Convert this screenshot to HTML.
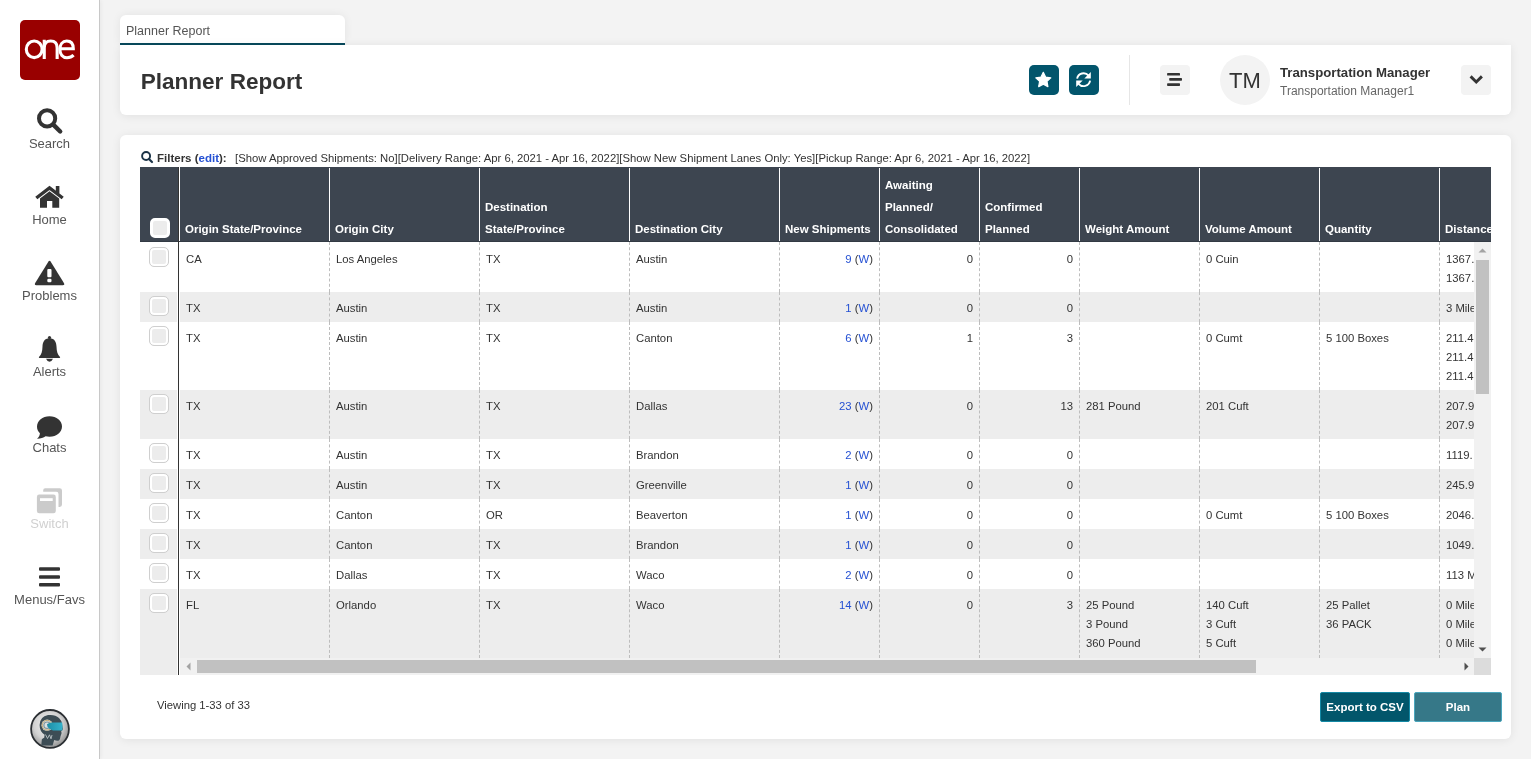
<!DOCTYPE html><html><head><meta charset="utf-8"><style>
*{box-sizing:border-box;margin:0;padding:0}
html,body{width:1531px;height:759px;overflow:hidden;background:#f3f3f3;font-family:"Liberation Sans",sans-serif;color:#333}
.a{position:absolute}
#side{position:absolute;left:0;top:0;width:100px;height:759px;background:#fff;border-right:1px solid #c8c8c8;box-shadow:1px 0 4px rgba(0,0,0,.05);z-index:2}
.logo{position:absolute;left:20px;top:20px;width:60px;height:60px;background:#990000;border-radius:5px}
.navt{position:absolute;left:0;width:99px;text-align:center;font-size:13px;line-height:16px;color:#555;white-space:nowrap}
#tab{position:absolute;left:120px;top:15px;width:225px;height:30px;background:#fff;border-radius:6px 6px 0 0;box-shadow:0 0 10px rgba(0,0,0,.07)}
#tab span{position:absolute;left:6px;top:8px;font-size:12.5px;color:#555;line-height:16px;white-space:nowrap}
#tab i{position:absolute;left:0;top:28px;width:225px;height:2px;background:#08495c}
#hdr{position:absolute;left:120px;top:45px;width:1391px;height:70px;background:#fff;border-radius:0 0 6px 6px;box-shadow:0 1px 10px rgba(0,0,0,.08)}
#card{position:absolute;left:120px;top:135px;width:1391px;height:604px;background:#fff;border-radius:6px;box-shadow:0 1px 10px rgba(0,0,0,.08)}
.title{position:absolute;left:140.7px;top:68.5px;font-size:22.55px;font-weight:bold;color:#333;line-height:26px;white-space:nowrap}
.b30{position:absolute;width:30px;height:30px;border-radius:4px}
.teal{background:#02556c;border-radius:5px}
.lg{background:#f3f3f3}
.nm{position:absolute;left:1280px;white-space:nowrap}
.filt{position:absolute;top:151px;left:157px;font-size:11.3px;line-height:14px;white-space:nowrap;color:#333}
#grid{position:absolute;left:140px;top:167px;width:1351px;height:508px;overflow:hidden;background:#fff}
.hb{position:absolute;left:0;top:0;width:1351px;height:75px;background:#3d4550;border-bottom:1px solid #323a44}
.hc{position:absolute;top:0;height:74px;color:#fff;font-weight:bold;font-size:11.5px;line-height:22px;padding:0 0 0 5px;white-space:nowrap}
.hc div{position:absolute;left:5px;bottom:1px}
.hsep{position:absolute;top:1px;width:1px;height:73px;background:#fff}
#body{position:absolute;left:40px;top:75px;width:1294px;height:416px;overflow:hidden}
.r{position:absolute;left:0;width:1400px}
.r.g{background:#ededed}
.c{position:absolute;top:0;bottom:0;border-right:1px dashed #bdbdbd;font-size:11.3px;line-height:19px;padding:7px 6px 0 6px;white-space:nowrap;overflow:hidden;color:#333}
.c.rt{text-align:right;padding-right:6px}
.lk{color:#2450d3}
.r0 .c{padding-top:8px}
.fz{position:absolute;left:0;width:37px}
.fz.g{background:#ededed}
.cb{position:absolute;left:9px;top:4px;width:20px;height:20px;border:1px solid #cfcfcf;border-radius:5px;background:#ececec;box-shadow:inset 0 0 0 2px #fff}
.sb{position:absolute;background:#f1f1f1}
.foot{position:absolute;left:157px;top:698px;font-size:11.25px;line-height:14px;color:#333;white-space:nowrap}
.fbtn{position:absolute;top:692px;height:30px;border-radius:2px;color:#fff;font-weight:bold;font-size:11.5px;line-height:28px;text-align:center;white-space:nowrap}
</style></head><body><div id="root" style="position:absolute;left:0;top:0;width:1531px;height:759px;overflow:hidden;will-change:transform"><div id="side"><div class="logo"><svg class="a" style="left:0px;top:0px" width="60" height="60" viewBox="0 0 60 60"><g fill="none" stroke="#fff" stroke-width="3.1"><ellipse cx="14.2" cy="29.3" rx="7.9" ry="8.3"/><path d="M24.25 38.9V19.8M24.25 28C24.25 23.2 27 21 30.7 21C34.4 21 37.15 23.2 37.15 28V38.9"/><path d="M40 28.8H53.3C53.3 23.5 50.5 21 46.7 21C42.5 21 39.9 24.5 39.9 29.3C39.9 34.5 42.8 37.7 47 37.7C49.8 37.7 52 36.8 53.6 35.2"/></g></svg></div><svg class="a" style="left:30px;top:100px" width="40" height="40" viewBox="0 0 40 40"><g fill="none" stroke="#333" stroke-width="4"><circle cx="17.1" cy="18.4" r="8.1"/><path d="M23.3 24.6L30.2 31.5" stroke-width="4.4" stroke-linecap="round"/></g></svg><svg class="a" style="left:30px;top:180px" width="40" height="32" viewBox="0 0 40 32"><g fill="#333"><path d="M6.3 18L19.5 8L32.7 18" fill="none" stroke="#333" stroke-width="3.4" stroke-linecap="butt" stroke-linejoin="miter"/><rect x="25.8" y="6" width="3.6" height="7.5"/><path d="M10 18.6L19.5 11.2L29.2 18.6V27.8H22.3V21H17V27.8H10Z"/></g></svg><svg class="a" style="left:30px;top:256px" width="40" height="32" viewBox="0 0 40 32"><path d="M18.5 5.5Q19.55 3.9 20.6 5.5L33.9 27Q35 29.2 32.8 29.2H6.3Q4.1 29.2 5.2 27Z" fill="#333"/><rect x="17.3" y="13" width="4.2" height="8.3" rx="1" fill="#fff"/><rect x="17.3" y="22.8" width="4.2" height="3.5" rx="1.2" fill="#fff"/></svg><svg class="a" style="left:30px;top:332px" width="40" height="32" viewBox="0 0 40 32"><g fill="#333"><circle cx="19.5" cy="5.6" r="1.6"/><path d="M19.5 6.2C14 6.2 12.7 10.5 12.5 14.5C12.3 19.5 11.5 22.5 9 25Q8.4 25.9 9.6 25.9H29.4Q30.6 25.9 30 25C27.5 22.5 26.7 19.5 26.5 14.5C26.3 10.5 25 6.2 19.5 6.2Z"/><path d="M16 26.7H23Q21.5 29.8 19.5 29.8Q17.5 29.8 16 26.7Z"/></g></svg><svg class="a" style="left:30px;top:410px" width="40" height="32" viewBox="0 0 40 32"><path d="M19.5 6.2C26.5 6.2 32 10.8 32 16.5C32 22.2 26.5 26.8 19.5 26.8C18 26.8 16.9 26.6 15.6 26.3C13.5 27.6 10.8 28.6 7 28.7C9 27 9.8 25.6 9.9 23.3C8 21.5 7 19.2 7 16.5C7 10.8 12.5 6.2 19.5 6.2Z" fill="#333"/></svg><svg class="a" style="left:30px;top:484px" width="40" height="32" viewBox="0 0 40 32"><g fill="#cbcbcb"><path d="M15.2 4.3H29.7Q32 4.3 32 6.6V20.6Q32 22.9 29.7 22.9H28.5V10Q28.5 7.8 26.3 7.8H13.2V6.3Q13.2 4.3 15.2 4.3Z"/><rect x="6.9" y="10.6" width="18.9" height="18.6" rx="2.3"/></g><rect x="10" y="14.2" width="12.7" height="2.8" fill="#fff"/></svg><svg class="a" style="left:30px;top:560px" width="40" height="32" viewBox="0 0 40 32"><g fill="#333"><rect x="9" y="7.3" width="21" height="3.5" rx="1"/><rect x="9" y="15.2" width="21" height="3.5" rx="1"/><rect x="9" y="23" width="21" height="3.6" rx="1"/></g></svg><div class="navt" style="top:136px;color:#555">Search</div><div class="navt" style="top:212px;color:#555">Home</div><div class="navt" style="top:288px;color:#555">Problems</div><div class="navt" style="top:364px;color:#555">Alerts</div><div class="navt" style="top:440px;color:#555">Chats</div><div class="navt" style="top:516px;color:#d0d0d0">Switch</div><div class="navt" style="top:592px;color:#555">Menus/Favs</div><svg class="a" style="left:28px;top:707px" width="44" height="44" viewBox="0 0 44 44"><defs><radialGradient id="ag" cx="45%" cy="40%" r="62%"><stop offset="0" stop-color="#f6f6f6"/><stop offset=".6" stop-color="#d2d2d2"/><stop offset="1" stop-color="#8f8f8f"/></radialGradient><linearGradient id="vg" x1="0" y1="0" x2="1" y2="0"><stop offset="0" stop-color="#1d8ea6"/><stop offset="1" stop-color="#35b3cc"/></linearGradient></defs><circle cx="22" cy="21.9" r="18.9" fill="url(#ag)" stroke="#2b2f33" stroke-width="1.8"/><path d="M13.3 38.5L13.8 32.5Q14.5 31.3 16.2 30.8L16.6 27.8Q11.6 24.6 11.6 18Q11.9 9.6 20 8.1Q27 7.2 31 11Q33.6 13.6 34 16.5L34.8 22Q34.8 23.6 33.2 24.3L33.6 26Q33.1 27.8 32.6 29Q32.2 32.3 31 33.6Q28.2 34.2 26.2 33L24.6 38.5Z" fill="#3d4d55"/><path d="M17.5 27.5L19.5 31.5L21.5 27.8L23 31.8L24 28" fill="none" stroke="#c9d0d3" stroke-width=".8"/><circle cx="19.1" cy="18.2" r="5.6" fill="#d9e0e3"/><circle cx="19.1" cy="18.2" r="4.9" fill="none" stroke="#c3a465" stroke-width=".9"/><circle cx="19.1" cy="18.2" r="3.2" fill="none" stroke="#7d959d" stroke-width="1.2"/><path d="M19 17.2Q21 15.6 24 15.6H34.2Q34.8 19.6 34.2 23.6H25Q21.5 23 19.5 19.8Z" fill="url(#vg)"/></svg></div><div id="tab"><span>Planner Report</span><i></i></div><div id="hdr"></div><div class="title">Planner Report</div><div class="b30 teal" style="left:1029px;top:65px"></div><svg class="a" style="left:1029px;top:65px" width="30" height="30" viewBox="0 0 30 30"><path d="M14.3 7.3L16.6 12.1L21.8 12.8L18 16.4L18.9 21.6L14.3 19.1L9.7 21.6L10.6 16.4L6.8 12.8L12 12.1Z" fill="#fff" stroke="#fff" stroke-width="1.2" stroke-linejoin="round"/></svg><div class="b30 teal" style="left:1069px;top:65px"></div><svg class="a" style="left:1069px;top:65px" width="30" height="30" viewBox="0 0 30 30"><g fill="none" stroke="#fff" stroke-width="1.9"><path d="M8.1 13.6A6.6 6.6 0 0 1 19.6 10.6"/><path d="M21.1 15.6A6.6 6.6 0 0 1 9.6 18.8"/></g><g fill="#fff"><path d="M21.8 7V13.5H15.3Z"/><path d="M7.2 22V15.6H13.7Z"/></g></svg><div class="a" style="left:1129px;top:55px;width:1px;height:50px;background:#e6e6e6"></div><div class="b30 lg" style="left:1160px;top:65px"></div><svg class="a" style="left:1160px;top:65px" width="30" height="30" viewBox="0 0 30 30"><g fill="#333"><rect x="7.1" y="8" width="12.9" height="2.6" rx=".7"/><rect x="9.2" y="13.1" width="12.8" height="2.6" rx=".7"/><rect x="7.1" y="18.3" width="12.9" height="2.6" rx=".7"/></g></svg><div class="a" style="left:1220px;top:55px;width:50px;height:50px;border-radius:50%;background:#f3f3f3;font-size:22px;line-height:52px;text-align:center;color:#333">TM</div><div class="nm" style="top:65px;font-size:13.2px;font-weight:bold;line-height:16px;color:#333">Transportation Manager</div><div class="nm" style="top:83px;font-size:12px;line-height:16px;color:#666">Transportation Manager1</div><div class="b30 lg" style="left:1461px;top:65px"></div><svg class="a" style="left:1461px;top:65px" width="30" height="30" viewBox="0 0 30 30"><path d="M9.6 11.4L15.25 17L20.9 11.4" fill="none" stroke="#333" stroke-width="2.9"/></svg><div id="card"></div><svg class="a" style="left:138px;top:148px" width="20" height="20" viewBox="0 0 20 20"><g fill="none" stroke="#1b3347" stroke-width="1.9"><circle cx="8.1" cy="8" r="4"/><path d="M11 11L14 14" stroke-width="2.2" stroke-linecap="round"/></g></svg><div class="filt" style="font-size:11.5px"><b>Filters (<span style="color:#2450d3">edit</span>):</b></div><div class="filt" style="left:235px">[Show Approved Shipments: No][Delivery Range: Apr 6, 2021 - Apr 16, 2022][Show New Shipment Lanes Only: Yes][Pickup Range: Apr 6, 2021 - Apr 16, 2022]</div><div id="grid"><div class="hb"></div><div class="a" style="left:10px;top:51px;width:20px;height:20px;border-radius:5px;background:#ececec;border:3px solid #fff"></div><div class="a" style="left:38px;top:0;width:1px;height:508px;background:#333"></div><div class="a" style="left:39px;top:0;width:1px;height:74px;background:#fff"></div><div class="hc" style="left:40px;width:150px"><div>Origin State/Province</div></div><div class="hsep" style="left:189px"></div><div class="hc" style="left:190px;width:150px"><div>Origin City</div></div><div class="hsep" style="left:339px"></div><div class="hc" style="left:340px;width:150px"><div>Destination<br>State/Province</div></div><div class="hsep" style="left:489px"></div><div class="hc" style="left:490px;width:150px"><div>Destination City</div></div><div class="hsep" style="left:639px"></div><div class="hc" style="left:640px;width:100px"><div>New Shipments</div></div><div class="hsep" style="left:739px"></div><div class="hc" style="left:740px;width:100px"><div>Awaiting<br>Planned/<br>Consolidated</div></div><div class="hsep" style="left:839px"></div><div class="hc" style="left:840px;width:100px"><div>Confirmed<br>Planned</div></div><div class="hsep" style="left:939px"></div><div class="hc" style="left:940px;width:120px"><div>Weight Amount</div></div><div class="hsep" style="left:1059px"></div><div class="hc" style="left:1060px;width:120px"><div>Volume Amount</div></div><div class="hsep" style="left:1179px"></div><div class="hc" style="left:1180px;width:120px"><div>Quantity</div></div><div class="hsep" style="left:1299px"></div><div class="hc" style="left:1300px;width:200px"><div>Distance</div></div><div id="body"><div class="r r0" style="top:0px;height:50px"><div class="c" style="left:0px;width:150px">CA</div><div class="c" style="left:150px;width:150px">Los Angeles</div><div class="c" style="left:300px;width:150px">TX</div><div class="c" style="left:450px;width:150px">Austin</div><div class="c rt" style="left:600px;width:100px"><span class="lk">9</span> (<span class="lk">W</span>)</div><div class="c rt" style="left:700px;width:100px">0</div><div class="c rt" style="left:800px;width:100px">0</div><div class="c" style="left:900px;width:120px"></div><div class="c" style="left:1020px;width:120px">0 Cuin</div><div class="c" style="left:1140px;width:120px"></div><div class="c" style="left:1260px;width:200px">1367.<br>1367.</div></div><div class="r g" style="top:50px;height:30px"><div class="c" style="left:0px;width:150px">TX</div><div class="c" style="left:150px;width:150px">Austin</div><div class="c" style="left:300px;width:150px">TX</div><div class="c" style="left:450px;width:150px">Austin</div><div class="c rt" style="left:600px;width:100px"><span class="lk">1</span> (<span class="lk">W</span>)</div><div class="c rt" style="left:700px;width:100px">0</div><div class="c rt" style="left:800px;width:100px">0</div><div class="c" style="left:900px;width:120px"></div><div class="c" style="left:1020px;width:120px"></div><div class="c" style="left:1140px;width:120px"></div><div class="c" style="left:1260px;width:200px">3 Miles</div></div><div class="r" style="top:80px;height:68px"><div class="c" style="left:0px;width:150px">TX</div><div class="c" style="left:150px;width:150px">Austin</div><div class="c" style="left:300px;width:150px">TX</div><div class="c" style="left:450px;width:150px">Canton</div><div class="c rt" style="left:600px;width:100px"><span class="lk">6</span> (<span class="lk">W</span>)</div><div class="c rt" style="left:700px;width:100px">1</div><div class="c rt" style="left:800px;width:100px">3</div><div class="c" style="left:900px;width:120px"></div><div class="c" style="left:1020px;width:120px">0 Cumt</div><div class="c" style="left:1140px;width:120px">5 100 Boxes</div><div class="c" style="left:1260px;width:200px">211.4<br>211.4<br>211.4</div></div><div class="r g" style="top:148px;height:49px"><div class="c" style="left:0px;width:150px">TX</div><div class="c" style="left:150px;width:150px">Austin</div><div class="c" style="left:300px;width:150px">TX</div><div class="c" style="left:450px;width:150px">Dallas</div><div class="c rt" style="left:600px;width:100px"><span class="lk">23</span> (<span class="lk">W</span>)</div><div class="c rt" style="left:700px;width:100px">0</div><div class="c rt" style="left:800px;width:100px">13</div><div class="c" style="left:900px;width:120px">281 Pound</div><div class="c" style="left:1020px;width:120px">201 Cuft</div><div class="c" style="left:1140px;width:120px"></div><div class="c" style="left:1260px;width:200px">207.9<br>207.9</div></div><div class="r" style="top:197px;height:30px"><div class="c" style="left:0px;width:150px">TX</div><div class="c" style="left:150px;width:150px">Austin</div><div class="c" style="left:300px;width:150px">TX</div><div class="c" style="left:450px;width:150px">Brandon</div><div class="c rt" style="left:600px;width:100px"><span class="lk">2</span> (<span class="lk">W</span>)</div><div class="c rt" style="left:700px;width:100px">0</div><div class="c rt" style="left:800px;width:100px">0</div><div class="c" style="left:900px;width:120px"></div><div class="c" style="left:1020px;width:120px"></div><div class="c" style="left:1140px;width:120px"></div><div class="c" style="left:1260px;width:200px">1119.</div></div><div class="r g" style="top:227px;height:30px"><div class="c" style="left:0px;width:150px">TX</div><div class="c" style="left:150px;width:150px">Austin</div><div class="c" style="left:300px;width:150px">TX</div><div class="c" style="left:450px;width:150px">Greenville</div><div class="c rt" style="left:600px;width:100px"><span class="lk">1</span> (<span class="lk">W</span>)</div><div class="c rt" style="left:700px;width:100px">0</div><div class="c rt" style="left:800px;width:100px">0</div><div class="c" style="left:900px;width:120px"></div><div class="c" style="left:1020px;width:120px"></div><div class="c" style="left:1140px;width:120px"></div><div class="c" style="left:1260px;width:200px">245.9</div></div><div class="r" style="top:257px;height:30px"><div class="c" style="left:0px;width:150px">TX</div><div class="c" style="left:150px;width:150px">Canton</div><div class="c" style="left:300px;width:150px">OR</div><div class="c" style="left:450px;width:150px">Beaverton</div><div class="c rt" style="left:600px;width:100px"><span class="lk">1</span> (<span class="lk">W</span>)</div><div class="c rt" style="left:700px;width:100px">0</div><div class="c rt" style="left:800px;width:100px">0</div><div class="c" style="left:900px;width:120px"></div><div class="c" style="left:1020px;width:120px">0 Cumt</div><div class="c" style="left:1140px;width:120px">5 100 Boxes</div><div class="c" style="left:1260px;width:200px">2046.</div></div><div class="r g" style="top:287px;height:30px"><div class="c" style="left:0px;width:150px">TX</div><div class="c" style="left:150px;width:150px">Canton</div><div class="c" style="left:300px;width:150px">TX</div><div class="c" style="left:450px;width:150px">Brandon</div><div class="c rt" style="left:600px;width:100px"><span class="lk">1</span> (<span class="lk">W</span>)</div><div class="c rt" style="left:700px;width:100px">0</div><div class="c rt" style="left:800px;width:100px">0</div><div class="c" style="left:900px;width:120px"></div><div class="c" style="left:1020px;width:120px"></div><div class="c" style="left:1140px;width:120px"></div><div class="c" style="left:1260px;width:200px">1049.</div></div><div class="r" style="top:317px;height:30px"><div class="c" style="left:0px;width:150px">TX</div><div class="c" style="left:150px;width:150px">Dallas</div><div class="c" style="left:300px;width:150px">TX</div><div class="c" style="left:450px;width:150px">Waco</div><div class="c rt" style="left:600px;width:100px"><span class="lk">2</span> (<span class="lk">W</span>)</div><div class="c rt" style="left:700px;width:100px">0</div><div class="c rt" style="left:800px;width:100px">0</div><div class="c" style="left:900px;width:120px"></div><div class="c" style="left:1020px;width:120px"></div><div class="c" style="left:1140px;width:120px"></div><div class="c" style="left:1260px;width:200px">113 Miles</div></div><div class="r g" style="top:347px;height:69px"><div class="c" style="left:0px;width:150px">FL</div><div class="c" style="left:150px;width:150px">Orlando</div><div class="c" style="left:300px;width:150px">TX</div><div class="c" style="left:450px;width:150px">Waco</div><div class="c rt" style="left:600px;width:100px"><span class="lk">14</span> (<span class="lk">W</span>)</div><div class="c rt" style="left:700px;width:100px">0</div><div class="c rt" style="left:800px;width:100px">3</div><div class="c" style="left:900px;width:120px">25 Pound<br>3 Pound<br>360 Pound</div><div class="c" style="left:1020px;width:120px">140 Cuft<br>3 Cuft<br>5 Cuft</div><div class="c" style="left:1140px;width:120px">25 Pallet<br>36 PACK</div><div class="c" style="left:1260px;width:200px">0 Miles<br>0 Miles<br>0 Miles</div></div></div><div class="fz" style="top:75px;height:50px"><div class="cb" style="top:5px"></div></div><div class="fz g" style="top:125px;height:30px"><div class="cb"></div></div><div class="fz" style="top:155px;height:68px"><div class="cb"></div></div><div class="fz g" style="top:223px;height:49px"><div class="cb"></div></div><div class="fz" style="top:272px;height:30px"><div class="cb"></div></div><div class="fz g" style="top:302px;height:30px"><div class="cb"></div></div><div class="fz" style="top:332px;height:30px"><div class="cb"></div></div><div class="fz g" style="top:362px;height:30px"><div class="cb"></div></div><div class="fz" style="top:392px;height:30px"><div class="cb"></div></div><div class="fz g" style="top:422px;height:69px"><div class="cb"></div></div><div class="fz g" style="top:491px;height:17px"></div><div class="a" style="left:37px;top:75px;width:1px;height:433px;background:#fff"></div><div class="a" style="left:39px;top:75px;width:1px;height:433px;background:#fff"></div><div class="sb" style="left:1334px;top:75px;width:17px;height:416px"></div><div class="a" style="left:1336px;top:93px;width:13px;height:134px;background:#c1c1c1"></div><svg class="a" style="left:1334px;top:75px" width="17" height="17" viewBox="0 0 17 17"><path d="M4.5 10.5L8.5 6.5L12.5 10.5Z" fill="#a3a3a3"/></svg><svg class="a" style="left:1334px;top:474px" width="17" height="17" viewBox="0 0 17 17"><path d="M4.5 6.5L8.5 10.5L12.5 6.5Z" fill="#505050"/></svg><div class="sb" style="left:40px;top:491px;width:1294px;height:17px"></div><div class="a" style="left:57px;top:493px;width:1059px;height:13px;background:#c1c1c1"></div><svg class="a" style="left:40px;top:491px" width="17" height="17" viewBox="0 0 17 17"><path d="M10.5 4.5L6.5 8.5L10.5 12.5Z" fill="#a3a3a3"/></svg><svg class="a" style="left:1318px;top:491px" width="17" height="17" viewBox="0 0 17 17"><path d="M6.5 4.5L10.5 8.5L6.5 12.5Z" fill="#505050"/></svg><div class="a" style="left:1334px;top:491px;width:17px;height:17px;background:#dcdcdc"></div></div><div class="foot">Viewing 1-33 of 33</div><div class="fbtn" style="left:1320px;width:90px;background:#02566b;border:1px solid #1489a5">Export to CSV</div><div class="fbtn" style="left:1414px;width:88px;background:#367888;border:1px solid #4aa6bd">Plan</div></div></body></html>
